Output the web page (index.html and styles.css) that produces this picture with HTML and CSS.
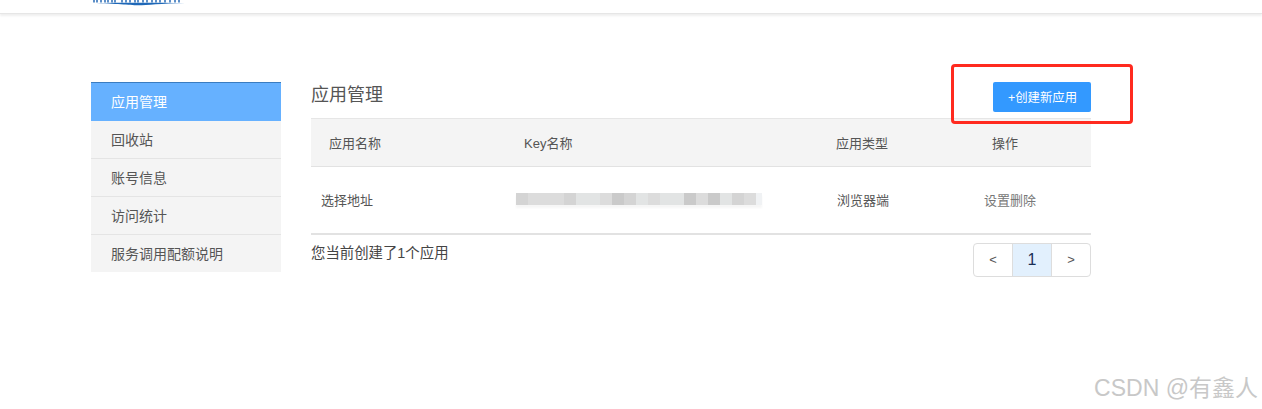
FILE: index.html
```html
<!DOCTYPE html>
<html lang="zh-CN">
<head>
    <meta charset="UTF-8">
    <meta name="viewport" content="width=device-width, initial-scale=1.0">
    <title>应用管理</title>
    <link rel="stylesheet" href="styles.css">
</head>
<body>
    <div class="header">
        <svg class="logo" width="96" height="6" viewBox="0 0 96 6">
            <path d="M3 0v2.5M6 0v2.5M10 0v2.5M14 0v2.5M17 0v2.5M21 0v2.5M24 0v2.5M31 0v2.5M35 0v2.5M39 0v2.5M44 0v2.5M47 0v2.5M52 0v2.5M56 0v2.5M61 0v2.5M65 0v2.5M69 0v2.5M74 0v2.5M79 0v2.5M84 0v2.5M88 0v2.5" stroke="#5d8fc8" stroke-width="2"/>
            <path d="M1 3C30 2.6 66 2.6 94 3C70 3.6 56 5.2 47 5.2C38 5.2 26 3.6 1 3Z" fill="#1f68b8"/>
        </svg>
    </div>

    <div class="page">
        <ul class="side">
            <li class="active">应用管理</li>
            <li>回收站</li>
            <li>账号信息</li>
            <li>访问统计</li>
            <li>服务调用配额说明</li>
        </ul>

        <div class="main">
            <div class="title-row">
                <h3>应用管理</h3>
                <button class="create">+创建新应用</button>
            </div>
            <div class="row head">
                <div class="c1">应用名称</div>
                <div class="c2">Key名称</div>
                <div class="c3">应用类型</div>
                <div class="c4">操作</div>
            </div>
            <div class="row body">
                <div class="c1">选择地址</div>
                <div class="c2">
                    <div class="blur">
                        <i class="d1"></i><i class="d2"></i><i class="d2"></i><i class="d2"></i><i class="d1"></i><i class="d3"></i><i class="d3"></i><i class="d2"></i><i class="d4"></i><i class="d1"></i><i class="d3"></i><i class="d2"></i><i class="d3"></i><i class="d3"></i><i class="d4"></i><i class="d2"></i><i class="d4"></i><i class="d3"></i><i class="d1"></i><i class="d2"></i><i class="d5"></i>
                    </div>
                </div>
                <div class="c3">浏览器端</div>
                <div class="c4">设置删除</div>
            </div>
            <div class="foot">
                <span>您当前创建了1个应用</span>
                <div class="pager">
                    <a>&lt;</a>
                    <a class="on">1</a>
                    <a>&gt;</a>
                </div>
            </div>
        </div>
    </div>

    <div class="mark"></div>
    <div class="watermark">CSDN @有鑫人</div>
</body>
</html>
```

FILE: styles.css
```css
* { box-sizing: border-box; font-family: "Liberation Sans", "Noto Sans CJK SC", sans-serif; }
html, body { margin: 0; height: 409px; overflow: hidden; background: #fff; }
body { position: relative; color: #555; font-size: 13px; }

.header { height: 14px; padding-left: 91px; border-bottom: 1px solid #e6e6e6; background: #fff; box-shadow: 0 2px 2px #efefef; }
.logo { display: block; }

.page { display: flex; gap: 30px; margin-top: 68px; padding-left: 91px; }

.side { width: 190px; height: 190px; margin: 0; padding: 0; list-style: none; font-size: 14px; background: #f4f4f4; }
.side li { height: 38px; padding-left: 20px; line-height: 38px; border-bottom: 1px solid #e4e4e4; }
.side li:last-child { border-bottom: 0; }
.side .active { height: 39px; line-height: 39px; color: #fff; background: #66b1ff; border-top: 1px solid #3a7cc0; border-bottom: 0; }

.main { width: 780px; }
.title-row { display: flex; justify-content: space-between; height: 36px; }
.title-row h3 { margin: 0; font-size: 18px; font-weight: normal; line-height: 26px; color: #555; }
.create { width: 98px; height: 30px; padding: 0 0 0 1px; border: 0; border-radius: 2px; color: #fff; font-size: 12.4px; background: #3399ff; }

.row { display: flex; align-items: center; }
.head { height: 49px; background: #f4f4f4; border-top: 1px solid #e6e6e6; border-bottom: 1px solid #e2e2e2; }
.body { height: 68px; padding-bottom: 2px; border-bottom: 2px solid #e2e2e2; }
.c1 { width: 213px; padding-left: 18px; }
.c2 { width: 312px; }
.c3 { width: 156px; }
.c4 { width: 99px; }
.body .c1 { width: 205px; padding-left: 10px; }
.body .c2 { width: 321px; }
.body .c3 { width: 147px; }
.body .c4 { width: 107px; color: #777; }

.blur { display: flex; width: 246px; height: 12px; box-shadow: 0 3px 2px #f6f6f6; }
.blur i { width: 12px; }
.blur .d1 { background: #d4d4d4; }
.blur .d2 { background: #dcdcdc; }
.blur .d3 { background: #e2e4e4; }
.blur .d4 { background: #cacaca; }
.blur .d5 { width: 6px; background: #f0f2f4; }

.foot { display: flex; justify-content: space-between; padding-top: 8px; font-size: 14.4px; line-height: 20px; color: #444; }
.pager { display: flex; height: 34px; border: 1px solid #ddd; border-radius: 4px; }
.pager a { width: 39px; line-height: 32px; text-align: center; color: #555; font-size: 13px; }
.pager a:first-child { width: 38px; }
.pager a + a { border-left: 1px solid #ddd; }
.pager .on { color: #1a2f55; font-size: 16px; background: #e2f0fd; }

.mark { position: absolute; left: 951px; top: 64px; width: 182px; height: 60px; border: 3px solid #ff2a1f; border-radius: 4px; }
.watermark { position: absolute; right: 4px; top: 375px; font-size: 23px; line-height: 26px; color: #c8c8c8; }
```
